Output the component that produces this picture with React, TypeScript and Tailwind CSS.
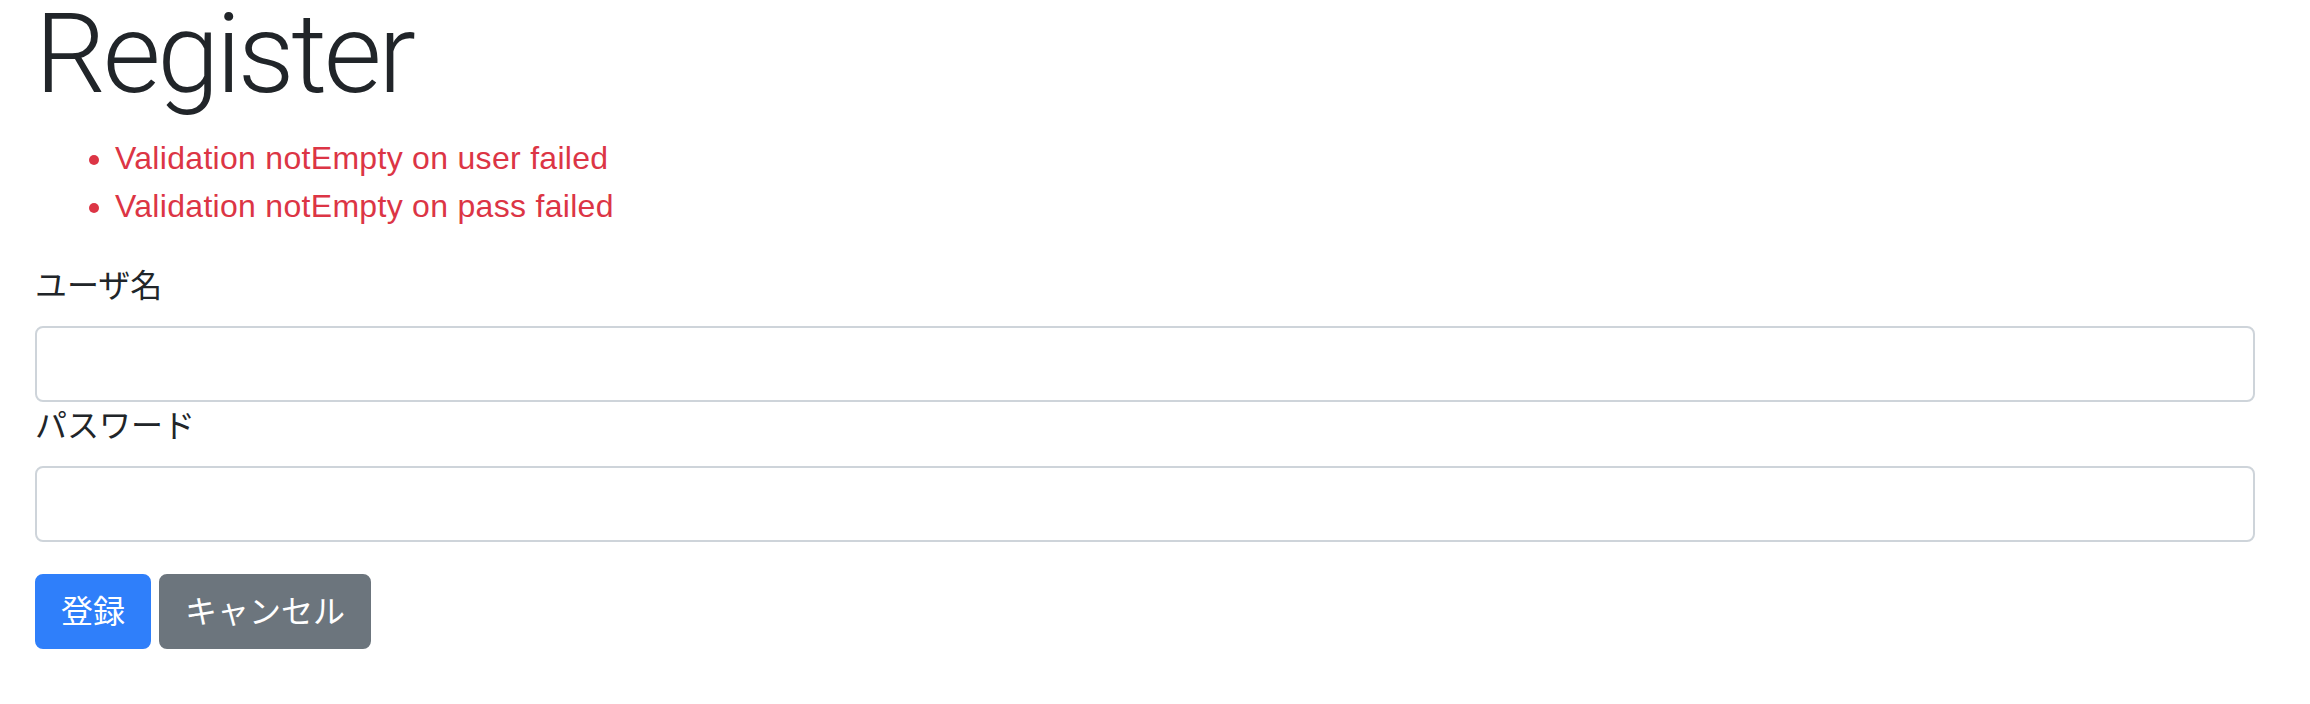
export default function App() {
  return (
    <div
      className="min-h-[704px] bg-white pl-[35px] pr-[55px] text-[#212529]"
      style={{ fontFamily: '"Liberation Sans", "Noto Sans CJK JP", sans-serif' }}
    >
      <h1
        className="mb-[26px] text-[112px] font-light leading-[108px] tracking-[-3.4px]"
        style={{ fontFamily: 'Roboto, "Liberation Sans", sans-serif' }}
      >
        Register
      </h1>
      <ul className="mb-8 list-disc pl-[80px] text-[32px] leading-[48px] tracking-[0.3px] text-[#dc3545]">
        <li>Validation notEmpty on user failed</li>
        <li>Validation notEmpty on pass failed</li>
      </ul>
      <form onSubmit={(e) => e.preventDefault()}>
        <label className="mb-4 block text-[32px] leading-[48px]">ユーザ名</label>
        <input
          type="text"
          className="block h-[76px] w-full rounded-lg border-2 border-[#ced4da] px-6 text-[32px] outline-none"
        />
        <label className="mb-4 block text-[32px] leading-[48px]">パスワード</label>
        <input
          type="password"
          className="block h-[76px] w-full rounded-lg border-2 border-[#ced4da] px-6 text-[32px] outline-none"
        />
        <div className="mt-8 flex gap-2">
          <button
            type="submit"
            className="h-[75px] rounded-lg border-2 border-[#2f7ffa] bg-[#2f7ffa] px-6 text-[32px] leading-[48px] text-white"
          >
            登録
          </button>
          <button
            type="button"
            className="h-[75px] rounded-lg border-2 border-[#6c757d] bg-[#6c757d] px-6 text-[32px] leading-[48px] text-white"
          >
            キャンセル
          </button>
        </div>
      </form>
    </div>
  );
}
